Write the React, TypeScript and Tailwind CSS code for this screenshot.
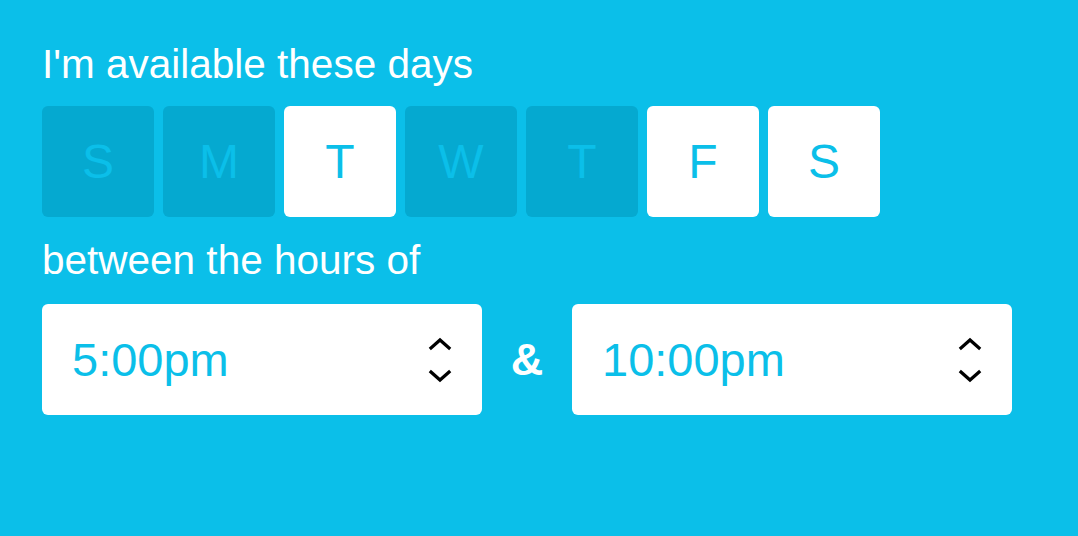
import { useState } from "react";

const days = [
  { label: "S", on: false },
  { label: "M", on: false },
  { label: "T", on: true },
  { label: "W", on: false },
  { label: "T", on: false },
  { label: "F", on: true },
  { label: "S", on: true },
];

const Chevrons = () => (
  <svg width="26" height="50" viewBox="0 0 26 50" fill="none" stroke="#000" strokeWidth="3.2" strokeLinecap="square">
    <path d="M4 13 L13 5 L22 13" />
    <path d="M4 37 L13 45 L22 37" />
  </svg>
);

const TimeSelect = ({ value }: { value: string }) => (
  <div className="flex items-center justify-between w-[440px] h-[111px] bg-white rounded-[6px] pl-[30px] pr-[29px]">
    <span className="text-[47px] text-[#0bbfe9] leading-none">{value}</span>
    <Chevrons />
  </div>
);

export default function App() {
  const [selected, setSelected] = useState(days.map(d => d.on));

  return (
    <div
      className="w-[1078px] h-[536px] bg-[#0bbfe9] pl-[42px] pt-[44px] text-white"
      style={{ fontFamily: '"Liberation Sans", Arial, sans-serif' }}
    >
      <p className="text-[40.5px] leading-[40px]">I'm available these days</p>
      <div className="flex gap-[9px] mt-[22px]">
        {days.map((d, i) => (
          <button
            key={i}
            onClick={() => setSelected(s => s.map((v, j) => (j === i ? !v : v)))}
            className={`w-[112px] h-[111px] rounded-[6px] flex items-center justify-center text-[48px] text-[#0bbfe9] ${
              selected[i] ? "bg-white" : "bg-[#05a9d0]"
            }`}
          >
            {d.label}
          </button>
        ))}
      </div>
      <p className="text-[40.5px] leading-[40px] mt-[23px]">between the hours of</p>
      <div className="flex items-center mt-[24px]">
        <TimeSelect value="5:00pm" />
        <span className="w-[90px] text-center text-[45px] font-bold leading-none">&amp;</span>
        <TimeSelect value="10:00pm" />
      </div>
    </div>
  );
}
